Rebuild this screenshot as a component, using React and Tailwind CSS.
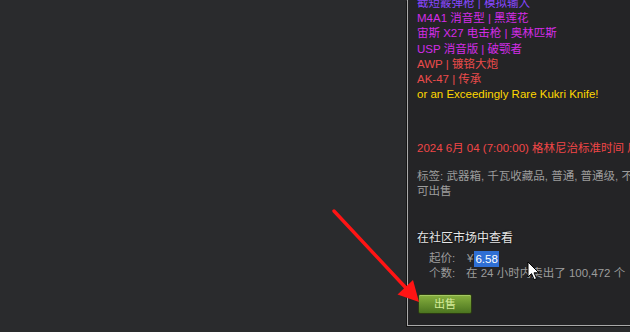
import React from 'react';

const font = { fontFamily: '"Liberation Sans", Arial, "Noto Sans CJK SC", sans-serif' };

const contents = [
  { name: '截短霰弹枪 | 模拟输入', color: 'text-[#8847ff]' },
  { name: 'M4A1 消音型 | 黑莲花', color: 'text-[#d32ce6]' },
  { name: '宙斯 X27 电击枪 | 奥林匹斯', color: 'text-[#d32ce6]' },
  { name: 'USP 消音版 | 破颚者', color: 'text-[#d32ce6]' },
  { name: 'AWP | 镀铬大炮', color: 'text-[#eb4b4b]' },
  { name: 'AK-47 | 传承', color: 'text-[#eb4b4b]' },
  { name: 'or an Exceedingly Rare Kukri Knife!', color: 'text-[#ffd700]' },
];

function RedArrow() {
  return (
    <svg className="absolute left-0 top-0 pointer-events-none" width="630" height="332">
      <line x1="334" y1="211" x2="406" y2="288" stroke="#ff1414" strokeWidth="3.4" strokeLinecap="round" />
      <polygon points="419,302 397.5,294.5 413,280" fill="#ff1414" />
    </svg>
  );
}

function Cursor() {
  return (
    <svg className="absolute left-[527px] top-[261px] pointer-events-none" width="14" height="21" viewBox="0 0 14 21">
      <path d="M1 1 L1 16 L4.5 12.6 L7.2 18.6 L9.6 17.6 L7 11.8 L11.8 11.8 Z" fill="#fff" stroke="#000" strokeWidth="1" strokeLinejoin="round" />
    </svg>
  );
}

export default function App() {
  return (
    <div className="relative w-[630px] h-[332px] overflow-hidden bg-[#2a2b2d]" style={font}>
      <div className="ml-[407px] w-[300px] h-[326px] border-l border-b border-[#a9a9a9] bg-[#242426] shadow-[-1px_1px_0_#161616] overflow-hidden">
        <div className="pl-[9px] -mt-[4px] text-[11.5px]">
          <div className="leading-[15.2px]">
            {contents.map((c) => (
              <div key={c.name} className={`whitespace-nowrap ${c.color}`}>{c.name}</div>
            ))}
          </div>

          <div className="mt-[39px] leading-[15px] whitespace-nowrap text-[#f04646]">
            2024 6月 04 (7:00:00) 格林尼治标准时间 后可交易
          </div>

          <div className="mt-[13px] leading-[15px] text-[#9c9c9c]">
            <div className="whitespace-nowrap">标签: 武器箱, 千瓦收藏品, 普通, 普通级, 不可交易,</div>
            <div className="whitespace-nowrap">可出售</div>
          </div>

          <div className="mt-[32px] leading-[15px] text-[12px] text-[#e6e6e6] [text-shadow:0_0_2px_#000]">
            在社区市场中查看
          </div>

          <div className="mt-[5px] pl-[12px] leading-[15px] text-[#9c9c9c]">
            <div className="flex whitespace-nowrap">
              <span className="w-[38px]">起价:</span>
              <span>¥</span>
              <span className="ml-[1px] px-[1px] bg-[#2f6fd4] text-white leading-[16px] -my-[0.5px]">6.58</span>
            </div>
            <div className="flex whitespace-nowrap">
              <span className="w-[37px]">个数:</span>
              <span>在 24 小时内卖出了 100,472 个</span>
            </div>
          </div>

          <button className="mt-[13px] ml-[1px] w-[54px] h-[20px] rounded-[2px] border border-[#2c3a14] bg-gradient-to-b from-[#88b13f] to-[#4c7520] text-[11px] text-[#d6ec9a] leading-none shadow-[inset_0_1px_0_#a4c862]">
            出售
          </button>
        </div>
      </div>
      <RedArrow />
      <Cursor />
    </div>
  );
}
